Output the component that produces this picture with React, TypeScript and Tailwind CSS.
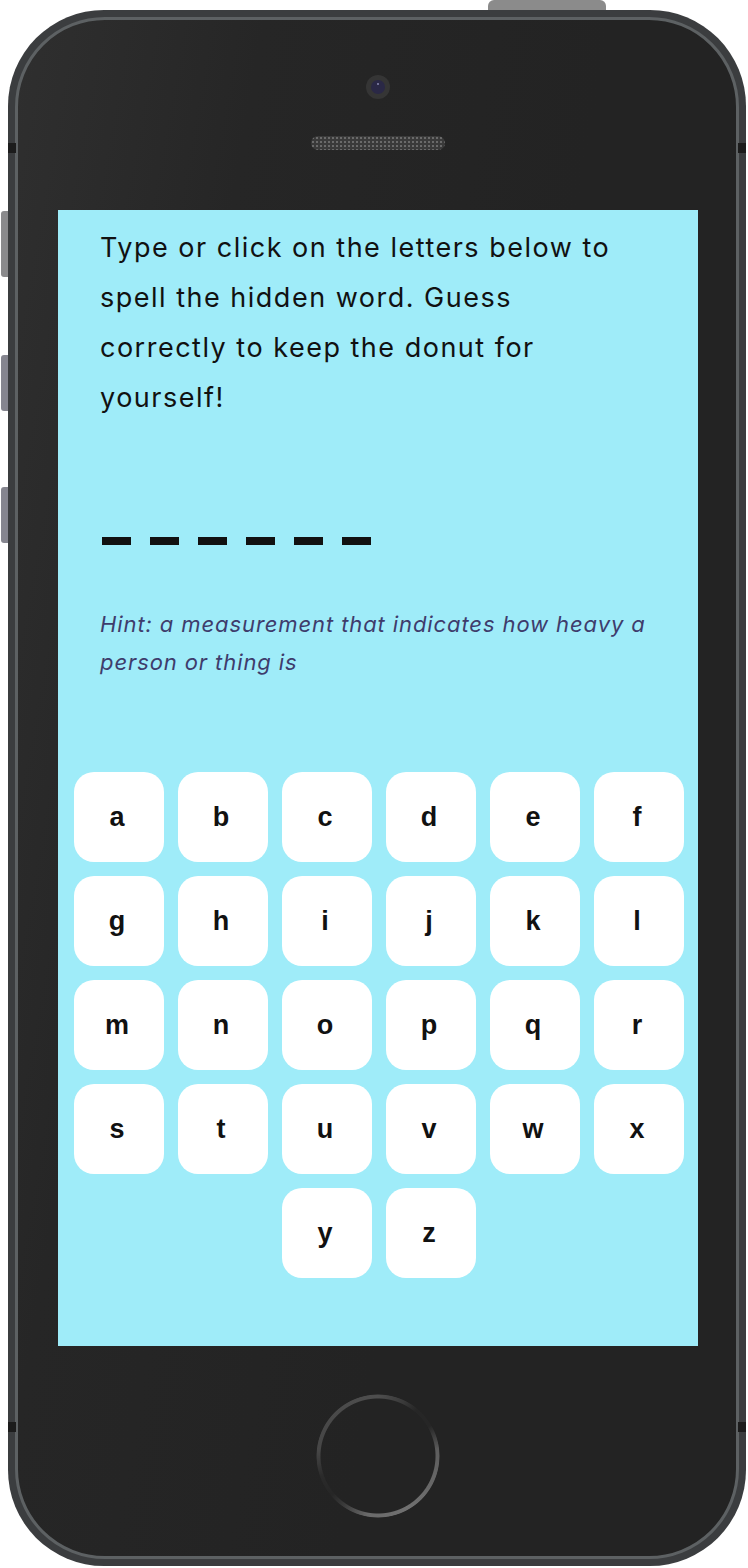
const letters = 'abcdefghijklmnopqrstuvwx'.split('')

function Key({ ch, className = '' }: { ch: string; className?: string }) {
    return (
        <button className={`h-[90px] w-[90px] rounded-[20px] bg-white pr-[4px] text-[27px] font-bold text-[#111] ${className}`}
            style={{ fontFamily: '"Liberation Sans", Arial, sans-serif' }}>
            {ch}
        </button>
    )
}

function HomeButton() {
    // ring drawn with a conic gradient, masked to a thin circle
    return (
        <span className="mt-[48px] h-[124px] w-[124px] rounded-full bg-[conic-gradient(from_0deg,#4e4e4e_0deg,#3a3a3a_25deg,#262626_40deg,#262626_60deg,#5e5e5e_85deg,#707070_150deg,#6a6a6a_190deg,#3a3a3a_215deg,#262626_230deg,#2a2a2a_250deg,#464646_275deg,#4a4a4a_320deg,#4e4e4e_360deg)] [mask:radial-gradient(circle,transparent_57px,black_58px,black_61px,transparent_62px)]" />
    )
}

export default function App() {
    return (
        <div className="relative h-[1568px] w-[748px] bg-white" style={{ fontFamily: 'Inter, "Noto Sans", sans-serif' }}>
            {/* side buttons, sitting behind the body */}
            <span className="absolute left-[488px] top-0 h-[16px] w-[118px] rounded-t-[6px] bg-[#8b8b8b]" />
            <span className="absolute left-[1px] top-[211px] h-[66px] w-[10px] rounded-l-[3px] bg-[#8a8a8c]" />
            <span className="absolute left-[1px] top-[355px] h-[56px] w-[10px] rounded-l-[3px] bg-[#85858f]" />
            <span className="absolute left-[1px] top-[487px] h-[56px] w-[10px] rounded-l-[3px] bg-[#85858f]" />

            {/* phone body */}
            <div className="absolute left-[8px] top-[10px] h-[1556px] w-[738px] rounded-[96px] bg-[#3b3d3f] p-[7px]">
                <div className="flex h-full w-full flex-col items-center rounded-[90px] border-[3px] border-[#5d6163] bg-[linear-gradient(100deg,#2f2f2f_0%,#262626_25%,#232323_60%)] pl-[2px]">
                    {/* camera */}
                    <span className="mt-[55px] flex h-[24px] w-[24px] items-center justify-center rounded-full bg-[#353535]">
                        <span className="flex h-[14px] w-[14px] items-start justify-center rounded-full bg-[#2a2846] pt-[3px]">
                            <span className="h-[2px] w-[2px] rounded-full bg-[#8a88b0]" />
                        </span>
                    </span>
                    {/* speaker */}
                    <span className="mt-[37px] h-[14px] w-[134px] rounded-full bg-[radial-gradient(#6a6a6a_1px,#3a3a3a_1.5px)] bg-[length:4px_4px]" />

                    <div className="mt-[60px] h-[1136px] w-[640px] bg-[#9fecf9] pt-[13px]">
                        <p className="pl-[42px] text-[27px] leading-[50px] tracking-[1.5px] text-[#111]">
                            Type or click on the letters below to<br />
                            spell the hidden word. Guess<br />
                            correctly to keep the donut for<br />
                            yourself!
                        </p>
                        <div className="mt-[114px] flex gap-[19px] pl-[44px]">
                            {[0, 1, 2, 3, 4, 5].map(i => (
                                <span key={i} className="h-[8px] w-[29px] bg-[#111]" />
                            ))}
                        </div>
                        <p className="mt-[60px] pl-[42px] text-[22px] italic leading-[38px] tracking-[0.9px] text-[#3e3c6c]">
                            Hint: a measurement that indicates how heavy a<br />
                            person or thing is
                        </p>
                        <div className="mt-[91px] grid grid-cols-[repeat(6,90px)] gap-[14px] px-[16px]">
                            {letters.map(l => <Key key={l} ch={l} />)}
                            <Key ch="y" className="col-start-3" />
                            <Key ch="z" />
                        </div>
                    </div>

                    <HomeButton />
                </div>
            </div>

            {/* antenna notches */}
            <span className="absolute left-[8px] top-[143px] h-[10px] w-[8px] bg-[#1c1c1c]" />
            <span className="absolute right-[2px] top-[143px] h-[10px] w-[8px] bg-[#1c1c1c]" />
            <span className="absolute left-[8px] top-[1422px] h-[10px] w-[8px] bg-[#1c1c1c]" />
            <span className="absolute right-[2px] top-[1422px] h-[10px] w-[8px] bg-[#1c1c1c]" />
        </div>
    )
}
